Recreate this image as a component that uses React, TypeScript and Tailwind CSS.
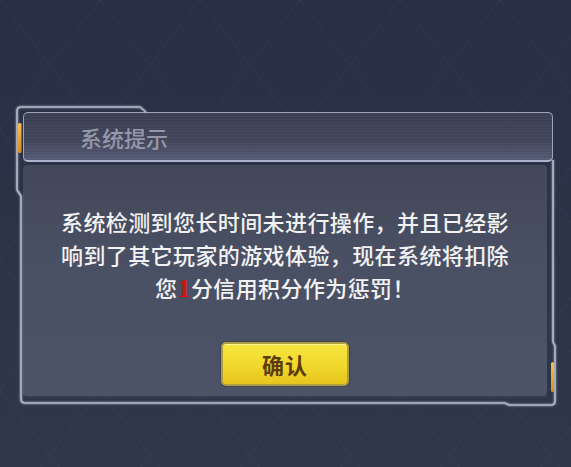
import React from "react";

const cjk = "font-['Noto_Sans_CJK_SC','Noto_Sans',sans-serif]";

function Frame() {
  return (
    <svg className="absolute left-0 top-0 pointer-events-none" width="571" height="467" viewBox="0 0 571 467">
      <defs>
        <filter id="glow" x="-10%" y="-10%" width="120%" height="120%">
          <feGaussianBlur stdDeviation="1.3" result="b" />
          <feMerge>
            <feMergeNode in="b" />
            <feMergeNode in="SourceGraphic" />
          </feMerge>
        </filter>
        <linearGradient id="og" x1="0" y1="0" x2="0" y2="1">
          <stop offset="0" stopColor="#f6c14a" />
          <stop offset="1" stopColor="#d98d1c" />
        </linearGradient>
      </defs>
      <path
        d="M146,112 L140,107 L21,107 Q17,107 17,111 L17,190 L21,196 L21,399 Q21,403 25,403 L505,403 L509,405 L551,405 Q555,405 555,401 L555,346 L553,342 L553,160"
        fill="none"
        stroke="#b3b7c7"
        strokeWidth="1.6"
        filter="url(#glow)"
      />
      <rect x="18" y="123" width="3.5" height="30" rx="1.5" fill="url(#og)" />
      <rect x="551" y="362" width="3" height="30" rx="1.5" fill="url(#og)" />
    </svg>
  );
}

function Pattern() {
  return (
    <svg className="absolute left-0 top-0" width="571" height="467" viewBox="0 0 571 467">
      <defs>
        <pattern id="dia" width="100" height="130" patternUnits="userSpaceOnUse">
          <path d="M0,0 L50,65 L100,0 M0,130 L50,65 L100,130" stroke="rgba(160,175,200,0.05)" strokeWidth="1" fill="none" />
        </pattern>
      </defs>
      <rect width="571" height="467" fill="url(#dia)" />
    </svg>
  );
}

export default function App() {
  return (
    <div className="relative w-[571px] h-[467px] overflow-hidden bg-[linear-gradient(180deg,#283046_0%,#2b3347_50%,#2f384b_100%)]">
      <Pattern />
      <div className="relative pt-[112px] pl-[23px] flex flex-col">
        <div className="w-[530px] h-[50px] rounded-[5px] border border-[#9ea3bb] border-b-2 border-b-[#aeb2cf] flex items-center pl-[56px] bg-[image:repeating-linear-gradient(180deg,rgba(255,255,255,0.035)_0px,rgba(255,255,255,0.035)_1px,transparent_1px,transparent_3px),linear-gradient(180deg,#3a3f52_0%,#41465b_60%,#565b76_100%)]">
          <span className={`${cjk} text-[22px] font-medium text-[#9498a9] leading-none`}>系统提示</span>
        </div>
        <div className="mt-[3px] w-[524px] h-[233px] rounded-[4px] bg-[linear-gradient(180deg,#424859_0%,#4a5063_40%,#4d5366_100%)] shadow-[inset_0_-2px_0_rgba(30,34,46,0.45)] flex flex-col items-center pt-[40px]">
          <div className={`${cjk} text-[22px] leading-[33px] tracking-[0.4px] text-[#f2f2f4] text-center font-medium`}>
            <div>系统检测到您长时间未进行操作，并且已经影</div>
            <div>响到了其它玩家的游戏体验，现在系统将扣除</div>
            <div>
              您<span className="font-['Liberation_Serif',serif] font-bold text-[#d8100f] text-[26px] leading-none">1</span>分信用积分作为惩罚！
            </div>
          </div>
          <button className="mt-[38px] w-[128px] h-[44px] rounded-[5px] border-2 border-[#ae9e48] bg-[linear-gradient(180deg,#f7e640_0%,#f0d82c_55%,#e6c41e_100%)] shadow-[0_0_0_1px_rgba(60,55,40,0.5),inset_0_1px_0_rgba(255,255,210,0.6)] flex items-center justify-center">
            <span className={`${cjk} text-[22px] font-bold text-[#5e3c10] tracking-[1px] leading-none`}>确认</span>
          </button>
        </div>
      </div>
      <Frame />
    </div>
  );
}
